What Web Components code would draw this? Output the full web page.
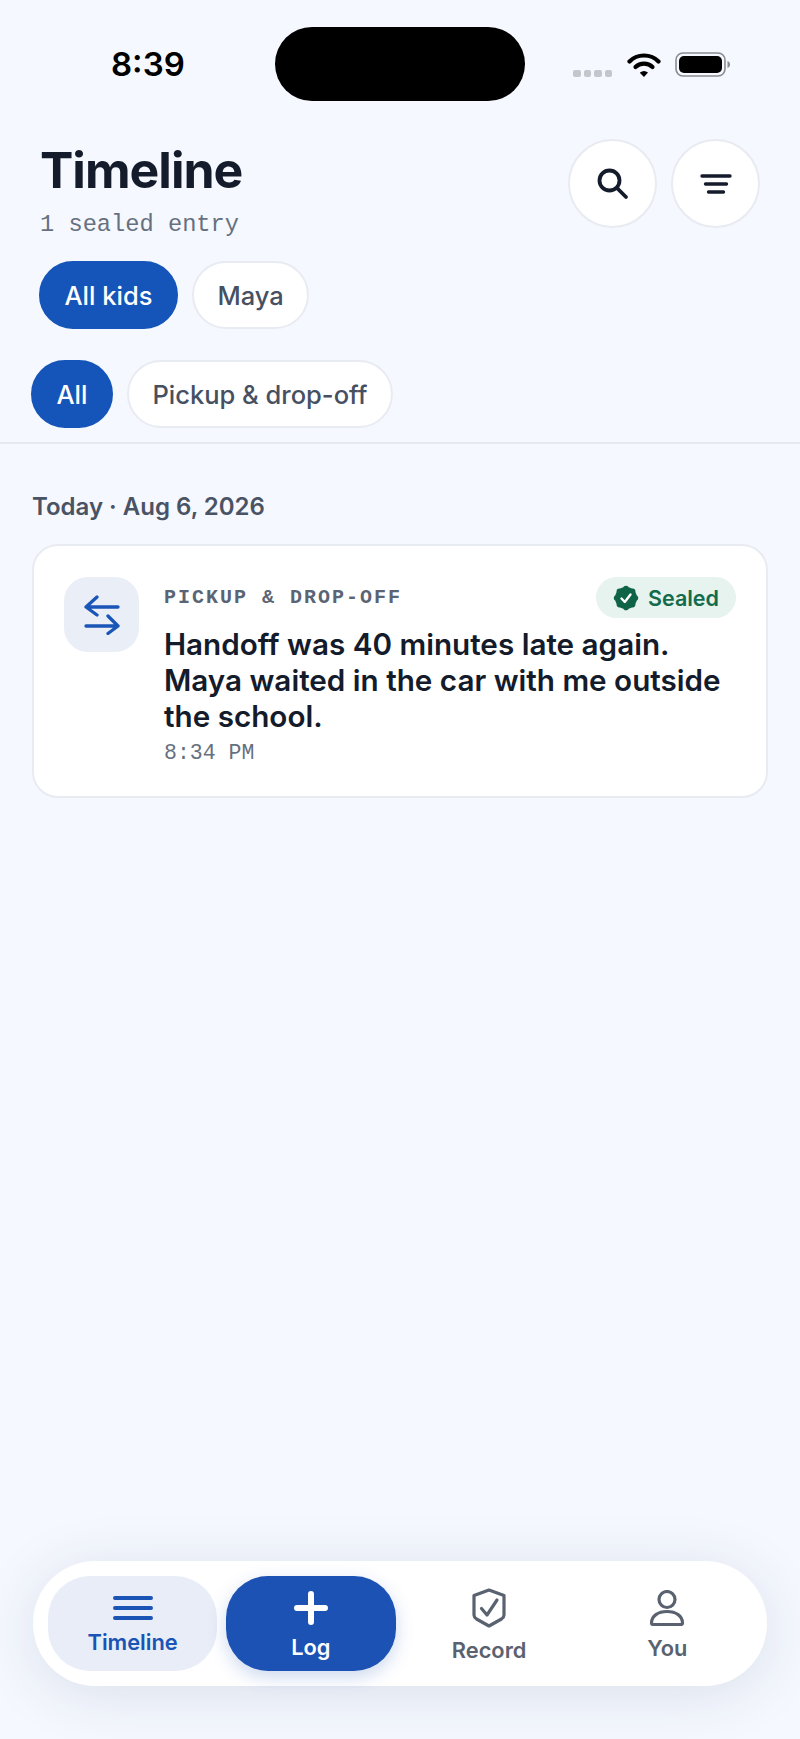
<!DOCTYPE html>
<html>
<head>
<meta charset="utf-8">
<title>Timeline</title>
<style>
    html, body{ margin:0; height:100%; }
    body{
        background:#f5f8fe;
        font-family:'Inter', 'Liberation Sans', sans-serif;
        color:#141b2b;
    }
    app-shell{ height:1739px; }
</style>
</head>
<body>
<app-shell>
    <status-bar></status-bar>
    <page-header></page-header>
    <chip-row style="--row-left:39px; --row-top:0px;">
        <filter-chip active>All kids</filter-chip>
        <filter-chip>Maya</filter-chip>
    </chip-row>
    <chip-row style="--row-left:31px; --row-top:31px;">
        <filter-chip active>All</filter-chip>
        <filter-chip>Pickup &amp; drop-off</filter-chip>
    </chip-row>
    <section-rule></section-rule>
    <day-label>Today · Aug 6, 2026</day-label>
    <entry-card category="PICKUP &amp; DROP-OFF" time="8:34 PM">Handoff was 40 minutes late again. Maya waited in the car with me outside the school.</entry-card>
    <bottom-nav>
        <nav-item active label="Timeline">
            <svg width="40" height="24" viewBox="0 0 40 24" fill="none" stroke="#1a54b5" stroke-width="4" stroke-linecap="round"><path d="M2 2H38M2 12H38M2 22H38"/></svg>
        </nav-item>
        <nav-item primary label="Log">
            <svg width="34" height="34" viewBox="0 0 34 34" fill="none" stroke="#fff" stroke-width="6" stroke-linecap="round"><path d="M17 3V31M3 17H31"/></svg>
        </nav-item>
        <nav-item label="Record">
            <svg width="34" height="40" viewBox="0 0 34 40" fill="none" stroke="#5a6270" stroke-width="3.2" stroke-linecap="round" stroke-linejoin="round"><path d="M17 2L32 7.5V27C32 29 31 30 29.5 31L17 38L4.5 31C3 30 2 29 2 27V7.5Z"/><path d="M9.5 20.5L15 27L25 12"/></svg>
        </nav-item>
        <nav-item label="You">
            <svg width="36" height="36" viewBox="0 0 36 36" fill="none" stroke="#5a6270" stroke-width="3.2" stroke-linecap="round" stroke-linejoin="round"><circle cx="18" cy="9.5" r="8"/><path d="M2.5 33C2.5 26 9 21.5 18 21.5S33.5 26 33.5 33C33.5 34 33 34.500 32 34.500H4C3 34.500 2.500 34 2.500 33Z"/></svg>
        </nav-item>
    </bottom-nav>
</app-shell>

<script>
class AppShell extends HTMLElement{
    constructor(){
        super();
        this.attachShadow({mode:'open'}).innerHTML = `
        <style>
            :host{ display:flex; flex-direction:column; overflow:hidden; }
        </style>
        <slot></slot>`;
    }
}

class StatusBar extends HTMLElement{
    constructor(){
        super();
        this.attachShadow({mode:'open'}).innerHTML = `
        <style>
            :host{
                display:grid;
                grid-template-columns:275px 250px 1fr;
                padding-top:27px;
                height:74px;
                align-items:center;
            }
            .time{
                font:600 33px 'Inter', sans-serif;
                color:#000;
                padding-left:111px;
            }
            .island{ height:74px; background:#000; border-radius:37px / 37px; }
            .icons{ display:flex; align-items:flex-start; height:25px; padding:0 0 0 48px; margin-top:1px; }
            .dots{ display:flex; gap:3px; margin-top:18px; margin-right:15px; }
            .dots i{ width:7.500px; height:7px; background:#c3c6cb; border-radius:2px; }
            svg{ display:block; }
            .battery{ margin-left:14px; }
        </style>
        <div class="time">8:39</div>
        <div class="island"></div>
        <div class="icons">
            <div class="dots"><i></i><i></i><i></i><i></i></div>
            <svg width="34" height="25" viewBox="0 0 34 25" fill="none" stroke="#000" stroke-width="4.200" stroke-linecap="round">
                <path d="M2.500 9.500C10 1.500 24 1.500 31.500 9.500"/>
                <path d="M8.500 15C13 10.500 21 10.500 25.500 15"/>
                <path d="M13 21L17 25L21 20.500Q17 17.500 13 20.500Z" fill="#000" stroke="none"/>
            </svg>
            <svg class="battery" width="56" height="25" viewBox="0 0 56 25" fill="none">
                <rect x="1" y="1" width="49" height="23" rx="7" stroke="#8a8c90" stroke-width="1.600"/>
                <rect x="4" y="4" width="43" height="17" rx="5" fill="#000"/>
                <path d="M52.500 9C54.500 10 55 11 55 12.500S54.500 15 52.500 16Z" fill="#8a8c90"/>
            </svg>
        </div>`;
    }
}

class PageHeader extends HTMLElement{
    constructor(){
        super();
        this.attachShadow({mode:'open'}).innerHTML = `
        <style>
            :host{
                display:flex;
                justify-content:space-between;
                align-items:flex-start;
                padding:38px 40px 0 40px;
                height:122px;
                box-sizing:content-box;
            }
            h1{
                margin:0;
                font:700 50px/62px 'Inter', sans-serif;
                letter-spacing:-1px;
                color:#141b2b;
            }
            p{
                margin:9px 0 0 0;
                font:400 23.700px/30px 'Liberation Mono', monospace;
                color:#667080;
            }
            .actions{ display:flex; gap:14px; }
        </style>
        <div class="text">
            <h1>Timeline</h1>
            <p>1 sealed entry</p>
        </div>
        <div class="actions">
            <icon-button>
                <svg width="32" height="32" viewBox="0 0 32 32" fill="none" stroke="#141b2b" stroke-width="3.800" stroke-linecap="round"><circle cx="12.500" cy="12.500" r="10"/><path d="M20.500 20.500L29 29"/></svg>
            </icon-button>
            <icon-button>
                <svg width="34" height="22" viewBox="0 0 34 22" fill="none" stroke="#141b2b" stroke-width="3.400" stroke-linecap="round"><path d="M3 3H31M6.500 11H27.500M9.500 19H24.500"/></svg>
            </icon-button>
        </div>`;
    }
}

class IconButton extends HTMLElement{
    constructor(){
        super();
        this.attachShadow({mode:'open'}).innerHTML = `
        <style>
            :host{
                display:flex;
                align-items:center;
                justify-content:center;
                width:89px;
                height:89px;
                box-sizing:border-box;
                background:#fff;
                border:2px solid #e8ebf1;
                border-radius:50%;
            }
        </style>
        <slot></slot>`;
    }
}

class ChipRow extends HTMLElement{
    constructor(){
        super();
        this.attachShadow({mode:'open'}).innerHTML = `
        <style>
            :host{
                display:flex;
                gap:14px;
                padding-left:var(--row-left, 0);
                padding-top:var(--row-top, 0);
            }
        </style>
        <slot></slot>`;
    }
}

class FilterChip extends HTMLElement{
    constructor(){
        super();
        this.attachShadow({mode:'open'}).innerHTML = `
        <style>
            :host{
                display:flex;
                align-items:center;
                height:68px;
                box-sizing:border-box;
                padding:0 23.500px;
                background:#fff;
                border:2px solid #e8ebf1;
                border-radius:34px;
                font:500 25.500px 'Inter', sans-serif;
                color:#475062;
            }
            :host([active]){
                background:#1554b8;
                border-color:#1554b8;
                color:#fff;
            }
        </style>
        <slot></slot>`;
    }
}

class SectionRule extends HTMLElement{
    constructor(){
        super();
        this.attachShadow({mode:'open'}).innerHTML = `
        <style>
            :host{ display:block; height:2px; background:#e4e8ef; margin-top:14px; }
        </style>`;
    }
}

class DayLabel extends HTMLElement{
    constructor(){
        super();
        this.attachShadow({mode:'open'}).innerHTML = `
        <style>
            :host{
                display:block;
                padding:48px 0 0 32px;
                font:600 24px/30px 'Inter', sans-serif;
                color:#4a5364;
            }
        </style>
        <slot></slot>`;
    }
}

class SealedBadge extends HTMLElement{
    constructor(){
        super();
        this.attachShadow({mode:'open'}).innerHTML = `
        <style>
            :host{
                display:flex;
                align-items:center;
                gap:9px;
                height:41px;
                padding:0 17px 0 17px;
                background:#e6f3ee;
                border-radius:21px;
                font:600 21.500px 'Inter', sans-serif;
                color:#126b4d;
            }
        </style>
        <svg width="26" height="26" viewBox="0 0 26 26">
            <g fill="#0f6347">
                <circle cx="13" cy="13" r="11"/>
                <circle cx="13" cy="3.600" r="2.800"/><circle cx="19.600" cy="6.400" r="2.800"/>
                <circle cx="22.400" cy="13" r="2.800"/><circle cx="19.600" cy="19.600" r="2.800"/>
                <circle cx="13" cy="22.400" r="2.800"/><circle cx="6.400" cy="19.600" r="2.800"/>
                <circle cx="3.600" cy="13" r="2.800"/><circle cx="6.400" cy="6.400" r="2.800"/>
            </g>
            <path d="M8.500 13.500L11.800 17L17.500 9.500" fill="none" stroke="#fff" stroke-width="2.400" stroke-linecap="round" stroke-linejoin="round"/>
        </svg>
        <slot></slot>`;
    }
}

class EntryCard extends HTMLElement{
    constructor(){
        super();
        this.attachShadow({mode:'open'}).innerHTML = `
        <style>
            :host{
                display:grid;
                grid-template-columns:75px 1fr;
                column-gap:25px;
                margin:22px 32px 0 32px;
                padding:31px 30px 30px 30px;
                background:#fff;
                border:2px solid #e8ebf1;
                border-radius:26px;
                box-sizing:border-box;
                height:254px;
            }
            .tile{
                width:75px;
                height:75px;
                border-radius:24px;
                background:#eaeef7;
                display:flex;
                align-items:center;
                justify-content:center;
            }
            .top{ display:flex; justify-content:space-between; align-items:center; }
            .category{
                font:700 20px 'Liberation Mono', monospace;
                letter-spacing:2px;
                color:#5b6473;
            }
            .title{
                margin-top:8px;
                font:600 29.650px/36px 'Inter', sans-serif;
                color:#141b2b;
            }
            .time{
                margin-top:6px;
                font:400 21.500px/26px 'Liberation Mono', monospace;
                color:#667080;
            }
        </style>
        <div class="tile">
            <svg width="36" height="40" viewBox="0 0 36 40" fill="none" stroke="#1a56b8" stroke-width="3.300" stroke-linecap="round" stroke-linejoin="round">
                <path d="M34 12H2M13 2L2 12L13 20"/>
                <path d="M2 31H34M24 21L34 31L24 38.500"/>
            </svg>
        </div>
        <div>
            <div class="top">
                <span class="category"></span>
                <sealed-badge>Sealed</sealed-badge>
            </div>
            <div class="title"><slot></slot></div>
            <div class="time"></div>
        </div>`;
        this.shadowRoot.querySelector('.category').textContent = this.getAttribute('category');
        this.shadowRoot.querySelector('.time').textContent = this.getAttribute('time');
    }
}

class BottomNav extends HTMLElement{
    constructor(){
        super();
        this.attachShadow({mode:'open'}).innerHTML = `
        <style>
            :host{
                display:grid;
                grid-template-columns:repeat(4, 1fr);
                column-gap:9px;
                margin:auto 33px 53px 33px;
                padding:15px;
                height:125px;
                box-sizing:border-box;
                background:#fff;
                border-radius:62px;
                box-shadow:0 8px 60px rgba(30, 50, 100, .12);
            }
        </style>
        <slot></slot>`;
    }
}

class NavItem extends HTMLElement{
    constructor(){
        super();
        this.attachShadow({mode:'open'}).innerHTML = `
        <style>
            :host{
                display:flex;
                flex-direction:column;
                align-items:center;
                justify-content:center;
                gap:9px;
                padding-top:3px;
                box-sizing:border-box;
                border-radius:42px;
                font:600 21.800px/26px 'Inter', sans-serif;
                color:#5a6270;
            }
            :host([active]){ background:#e9edf7; color:#1a54b5; }
            :host([primary]){
                background:#1b52b4;
                color:#fff;
                box-shadow:0 6px 18px rgba(27, 82, 180, .22);
            }
            ::slotted(svg){ display:block; }
        </style>
        <slot></slot>
        <span class="label"></span>`;
        this.shadowRoot.querySelector('.label').textContent = this.getAttribute('label');
    }
}

customElements.define('app-shell', AppShell);
customElements.define('status-bar', StatusBar);
customElements.define('page-header', PageHeader);
customElements.define('icon-button', IconButton);
customElements.define('chip-row', ChipRow);
customElements.define('filter-chip', FilterChip);
customElements.define('section-rule', SectionRule);
customElements.define('day-label', DayLabel);
customElements.define('sealed-badge', SealedBadge);
customElements.define('entry-card', EntryCard);
customElements.define('bottom-nav', BottomNav);
customElements.define('nav-item', NavItem);
</script>
</body>
</html>
